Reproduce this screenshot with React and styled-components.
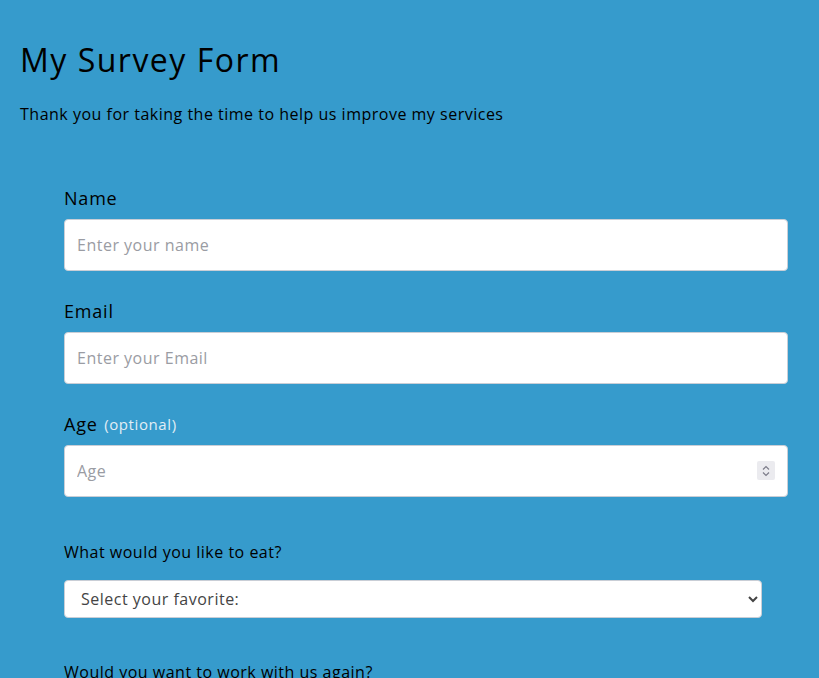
import styled, { createGlobalStyle } from "styled-components";

const GlobalStyle = createGlobalStyle`
  html, body {
    margin: 0;
    padding: 0;
    background-color: #369bcc;
    font-family: "Open Sans", "Liberation Sans", sans-serif;
    color: #000;
    letter-spacing: 0.5px;
  }
  * { box-sizing: border-box; }
`;

function App() {
  return (
    <Page>
      <GlobalStyle />
      <Header>
        <Title>My Survey Form</Title>
        <Subtitle>Thank you for taking the time to help us improve my services</Subtitle>
      </Header>

      <Form>
        <Field>
          <Label htmlFor="name">Name</Label>
          <Input id="name" type="text" placeholder="Enter your name" />
        </Field>
        <Field>
          <Label htmlFor="email">Email</Label>
          <Input id="email" type="email" placeholder="Enter your Email" />
        </Field>
        <Field>
          <Label htmlFor="age">
            Age <Hint>(optional)</Hint>
          </Label>
          <InputWrap>
            <Input id="age" type="text" placeholder="Age" />
            <Spinner>
              <svg width="10" height="14" viewBox="0 0 10 14" fill="none" stroke="#7d7d8a" strokeWidth="1.2">
                <path d="M2 5.5 L5 2.5 L8 5.5" />
                <path d="M2 8.5 L5 11.5 L8 8.5" />
              </svg>
            </Spinner>
          </InputWrap>
        </Field>

        <Question>What would you like to eat?</Question>
        <Select defaultValue="">
          <option value="" disabled>Select your favorite:</option>
          <option>Pizza</option>
          <option>Pasta</option>
          <option>Salad</option>
        </Select>

        <Question top={"42px"}>Would you want to work with us again?</Question>
      </Form>
    </Page>
  );
}

const Page = styled.div`
  padding: 36px 20px 40px 20px;
  min-height: 100vh;
`;

const Header = styled.header`
  display: flex;
  flex-direction: column;
  gap: 18px;
`;

const Title = styled.h1`
  margin: 0;
  font-size: 32px;
  line-height: 48px;
  font-weight: 400;
  letter-spacing: 1.5px;
`;

const Subtitle = styled.p`
  margin: 0;
  font-size: 16px;
  line-height: 24px;
`;

const Form = styled.form`
  display: flex;
  flex-direction: column;
  margin: 58px 11px 0 44px;
`;

const Field = styled.div`
  display: flex;
  flex-direction: column;
  gap: 8px;
  margin-bottom: 26px;
`;

const Label = styled.label`
  font-size: 18px;
  line-height: 27px;
  height: 27px;
  padding-top: 1px;
  letter-spacing: 0.8px;
`;

const Hint = styled.span`
  font-size: 15px;
  color: #e2eef5;
  position: relative;
  top: -1px;
  margin-left: 1px;
  letter-spacing: 0.6px;
`;

const InputWrap = styled.div`
  position: relative;
`;

const Input = styled.input`
  width: 100%;
  height: 52px;
  padding: 0 12px;
  border: 1px solid #c9ced6;
  border-radius: 4px;
  background: #fff;
  font-family: inherit;
  font-size: 16px;
  letter-spacing: 0.5px;
  color: #222;
  outline: none;

  &::placeholder {
    color: #9a9ca3;
  }
`;

const Spinner = styled.span`
  position: absolute;
  right: 13px;
  top: 16px;
  width: 18px;
  height: 19px;
  background: #ebebef;
  display: flex;
  align-items: center;
  justify-content: center;
  border-radius: 2px;
`;

const Question = styled.p`
  margin: ${(p) => (p.top ? p.top : "17px")} 0 0 0;
  font-size: 16px;
  line-height: 24px;
`;

const Select = styled.select`
  margin-top: 16px;
  width: calc(100% - 26px);
  height: 38px;
  padding: 0 12px;
  border: 1px solid #c9ced6;
  border-radius: 4px;
  background: #fff;
  font-family: inherit;
  font-size: 16px;
  letter-spacing: 0.5px;
  color: #444;
`;

export default App;
